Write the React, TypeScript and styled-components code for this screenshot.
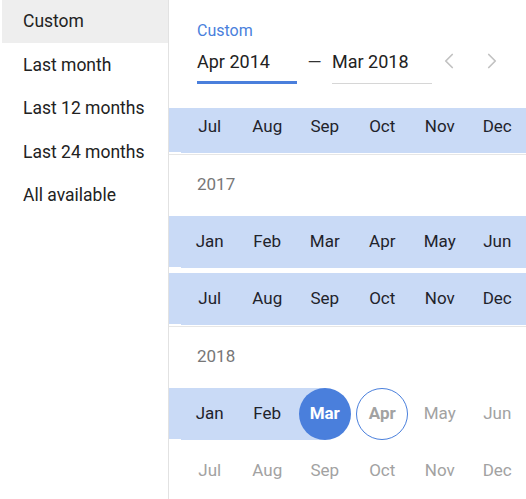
import * as React from 'react';
import styled, { createGlobalStyle, css } from 'styled-components';
import { ChevronLeft, ChevronRight } from 'lucide-react';

const GlobalStyle = createGlobalStyle`
  html, body, #root {
    margin: 0;
    height: 100%;
  }
  body {
    font-family: Roboto, 'Noto Sans', Arial, sans-serif;
    color: #212121;
    background: #fff;
  }
`;

const BLUE = '#4a7fdc';
const BAND = '#c9daf6';
const MONTHS = ['Jan', 'Feb', 'Mar', 'Apr', 'May', 'Jun', 'Jul', 'Aug', 'Sep', 'Oct', 'Nov', 'Dec'];
const PRESETS = ['Custom', 'Last month', 'Last 12 months', 'Last 24 months', 'All available'];

// range: Apr 2014 .. Mar 2018, Apr 2018 is the focused month
const START = 2014 * 12 + 3;
const END = 2018 * 12 + 2;
const FOCUS = 2018 * 12 + 3;

// what is loaded into the list: the tail of 2016, then full years
const LOADED = [
  { year: 2016, halves: [1], label: false },
  { year: 2017, halves: [0, 1], label: true },
  { year: 2018, halves: [0, 1], label: true },
];

const Page = styled.div`
  display: flex;
  height: 100vh;
  overflow: hidden;
`;

const Sidebar = styled.nav`
  width: 168px;
  flex-shrink: 0;
  border-right: 1px solid #e2e2e2;
  display: flex;
  flex-direction: column;
`;

const Preset = styled.div<{ $active?: boolean }>`
  height: 44px;
  flex-shrink: 0;
  margin: -1px 0 0.5px 2px;
  padding-left: 21px;
  display: flex;
  align-items: center;
  font-size: 17.5px;
  color: #222;
  background: ${({ $active }) => ($active ? '#eeeeee' : 'transparent')};
`;

const Main = styled.section`
  flex: 1;
  display: flex;
  flex-direction: column;
  min-width: 0;
`;

const Header = styled.header`
  height: 108px;
  flex-shrink: 0;
  box-sizing: border-box;
  padding: 21px 0 0 28px;
`;

const FieldLabel = styled.div`
  font-size: 16px;
  line-height: 20px;
  color: ${BLUE};
`;

const Inputs = styled.div`
  display: flex;
  align-items: flex-end;
  margin-top: 1px;
`;

const DateInput = styled.div<{ $active?: boolean }>`
  width: 100px;
  height: 42px;
  box-sizing: border-box;
  padding-top: 9px;
  font-size: 18px;
  line-height: 22px;
  color: #222;
  ${({ $active }) =>
    $active
      ? css`
          border-bottom: 3px solid ${BLUE};
        `
      : css`
          border-bottom: 1px solid #d6d6d6;
        `}
`;

const Dash = styled.div`
  width: 35px;
  height: 42px;
  box-sizing: border-box;
  padding-top: 9px;
  text-align: center;
  font-size: 18px;
  line-height: 22px;
  color: #333;
`;

const NavButton = styled.button`
  width: 30px;
  height: 30px;
  margin-bottom: 8px;
  padding: 0;
  border: 0;
  background: none;
  color: #c2c2c2;
  display: flex;
  align-items: center;
  justify-content: center;
`;

const NavGroup = styled.div`
  display: flex;
  gap: 13px;
  margin-left: 2px;
`;

const Calendar = styled.div`
  flex: 1;
  overflow-y: auto;
  padding-bottom: 24px;
  scrollbar-width: none;
  &::-webkit-scrollbar {
    display: none;
  }
`;

const YearSection = styled.div`
  padding-bottom: 2px;
  border-bottom: 1px solid #e6e6e6;
  &:last-child {
    border-bottom: 0;
  }
`;

const YearLabel = styled.div`
  height: 61px;
  box-sizing: border-box;
  padding: 19px 0 0 28px;
  font-size: 17px;
  line-height: 20px;
  color: #777;
`;

const Rows = styled.div`
  display: flex;
  flex-direction: column;
  gap: 6px;
`;

const Row = styled.div<{ $lead: boolean }>`
  display: grid;
  grid-template-columns: repeat(6, 1fr);
  height: 51px;
  padding-left: 12px;
  background: ${({ $lead }) => ($lead ? `linear-gradient(to right, ${BAND} 12px, transparent 12px)` : 'transparent')};
`;

type Band = 'none' | 'full' | 'left' | 'right';

const bandBg = (band: Band) => {
  if (band === 'full') return BAND;
  if (band === 'left') return `linear-gradient(to right, ${BAND} 50%, transparent 50%)`;
  if (band === 'right') return `linear-gradient(to right, transparent 50%, ${BAND} 50%)`;
  return 'transparent';
};

const Cell = styled.div<{ $band: Band }>`
  display: flex;
  align-items: center;
  justify-content: center;
  background: ${({ $band }) => bandBg($band)};
`;

const MonthMark = styled.span<{ $kind: 'in' | 'out' | 'edge' | 'focus' }>`
  width: 52px;
  height: 52px;
  box-sizing: border-box;
  padding-bottom: 2px;
  border-radius: 50%;
  display: flex;
  align-items: center;
  justify-content: center;
  font-size: 17px;
  color: ${({ $kind }) => ($kind === 'in' ? '#1f232b' : $kind === 'edge' ? '#fff' : '#a2a2a2')};
  font-weight: ${({ $kind }) => ($kind === 'edge' || $kind === 'focus' ? 700 : 400)};
  background: ${({ $kind }) => ($kind === 'edge' ? BLUE : 'transparent')};
  border: ${({ $kind }) => ($kind === 'focus' ? `1.5px solid ${BLUE}` : '0')};
`;

function MonthRow({ year, half }: { year: number; half: number }) {
  const first = year * 12 + half * 6;
  const cells = MONTHS.slice(half * 6, half * 6 + 6).map((name, i) => {
    const idx = first + i;
    const inRange = idx >= START && idx <= END;
    let band: Band = inRange ? 'full' : 'none';
    let kind: 'in' | 'out' | 'edge' | 'focus' = inRange ? 'in' : 'out';
    if (idx === START || idx === END) {
      kind = 'edge';
      band = START === END ? 'none' : idx === START ? 'right' : 'left';
    }
    if (idx === FOCUS) kind = 'focus';
    return (
      <Cell key={name} $band={band}>
        <MonthMark $kind={kind}>{name}</MonthMark>
      </Cell>
    );
  });
  const lead = first > START && first <= END;
  return <Row $lead={lead}>{cells}</Row>;
}

export default function App() {
  const calRef = React.useRef<HTMLDivElement>(null);

  React.useLayoutEffect(() => {
    if (calRef.current) calRef.current.scrollTop = 7;
  }, []);

  return (
    <>
      <GlobalStyle />
      <Page>
        <Sidebar>
          {PRESETS.map((p, i) => (
            <Preset key={p} $active={i === 0}>
              {p}
            </Preset>
          ))}
        </Sidebar>
        <Main>
          <Header>
            <FieldLabel>Custom</FieldLabel>
            <Inputs>
              <DateInput $active>Apr 2014</DateInput>
              <Dash>—</Dash>
              <DateInput>Mar 2018</DateInput>
              <NavGroup>
                <NavButton aria-label='Previous'>
                  <ChevronLeft size={26} strokeWidth={1.6} />
                </NavButton>
                <NavButton aria-label='Next'>
                  <ChevronRight size={26} strokeWidth={1.6} />
                </NavButton>
              </NavGroup>
            </Inputs>
          </Header>
          <Calendar ref={calRef}>
            {LOADED.map(({ year, halves, label }) => (
              <YearSection key={year}>
                {label && <YearLabel>{year}</YearLabel>}
                <Rows>
                  {halves.map((h) => (
                    <MonthRow key={h} year={year} half={h} />
                  ))}
                </Rows>
              </YearSection>
            ))}
          </Calendar>
        </Main>
      </Page>
    </>
  );
}
